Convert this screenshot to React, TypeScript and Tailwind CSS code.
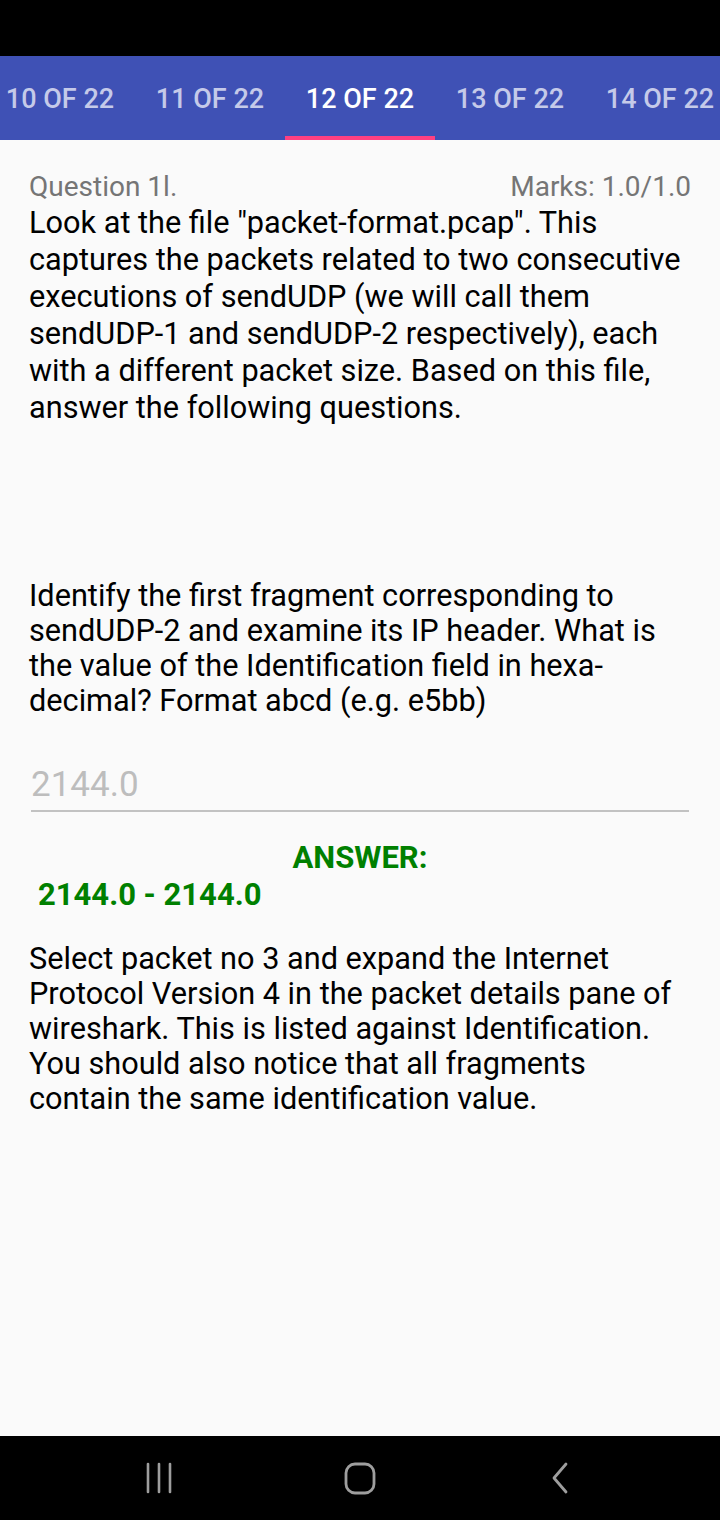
import React from 'react';

const tabs = ['10 OF 22', '11 OF 22', '12 OF 22', '13 OF 22', '14 OF 22'];

const App = () => {
  const active = 2;

  return (
    <div className="w-[720px] h-[1520px] flex flex-col bg-[#fafafa] font-['Roboto',sans-serif] overflow-hidden">
      <div className="h-[56px] bg-black shrink-0" />

      <div className="h-[84px] bg-[#3f51b5] shrink-0 flex -ml-[15px]">
        {tabs.map((t, i) => (
          <div
            key={t}
            className={`relative w-[150px] shrink-0 flex items-center justify-center pt-[3px] text-[27px] font-medium ${
              i === active ? 'text-white' : 'text-[#c5cae9]'
            }`}
          >
            {t}
            {i === active && <div className="absolute left-0 right-0 bottom-0 h-[4px] bg-[#ff4081]" />}
          </div>
        ))}
      </div>

      <div className="flex-1 px-[29px] pt-[30px]">
        <div className="flex justify-between text-[28px] text-[#757575] leading-[34px]">
          <span>Question 1l.</span>
          <span>Marks: 1.0/1.0</span>
        </div>
        <p className="text-[30.7px] leading-[37px] text-black">
          Look at the file "packet-format.pcap". This captures the packets related to two consecutive executions of sendUDP (we will call them sendUDP-1 and sendUDP-2 respectively), each with a different packet size. Based on this file, answer the following questions.
        </p>

        <p className="mt-[152px] text-[30.7px] leading-[35px] text-black">
          Identify the first fragment corresponding to sendUDP-2 and examine its IP header. What is the value of the Identification field in hexa-decimal? Format abcd (e.g. e5bb)
        </p>

        <div className="mt-[47px] ml-[2px] w-[658px] border-b-2 border-[#c2c2c2] pb-[5px]">
          <span className="block text-[35px] leading-[40px] text-[#bdbdbd]">2144.0</span>
        </div>

        <div className="mt-[29px] text-center text-[31px] leading-[34px] font-bold text-[#008000]">ANSWER:</div>
        <div className="ml-[9px] mt-[3px] text-[31px] leading-[34px] font-bold text-[#008000]">2144.0 - 2144.0</div>

        <p className="mt-[29px] text-[30.7px] leading-[35px] text-black">
          Select packet no 3 and expand the Internet Protocol Version 4 in the packet details pane of wireshark. This is listed against Identification. You should also notice that all fragments contain the same identification value.
        </p>
      </div>

      <div className="h-[84px] bg-black shrink-0 flex items-center px-[60px]">
        <div className="w-[200px] flex justify-center">
          <svg width="28" height="32" viewBox="0 0 28 32">
            <g stroke="#9e9e9e" strokeWidth="2.6" strokeLinecap="round">
              <line x1="2" y1="2" x2="2" y2="30" />
              <line x1="13" y1="2" x2="13" y2="30" />
              <line x1="24" y1="2" x2="24" y2="30" />
            </g>
          </svg>
        </div>
        <div className="w-[200px] flex justify-center">
          <svg width="32" height="33" viewBox="0 0 32 33">
            <rect x="2" y="2" width="28" height="29" rx="9" fill="none" stroke="#9e9e9e" strokeWidth="2.8" />
          </svg>
        </div>
        <div className="w-[200px] flex justify-center">
          <svg width="18" height="32" viewBox="0 0 18 32">
            <polyline points="15,2 3,16 15,30" fill="none" stroke="#9e9e9e" strokeWidth="2.8" strokeLinecap="round" strokeLinejoin="round" />
          </svg>
        </div>
      </div>
    </div>
  );
};

export default App;
